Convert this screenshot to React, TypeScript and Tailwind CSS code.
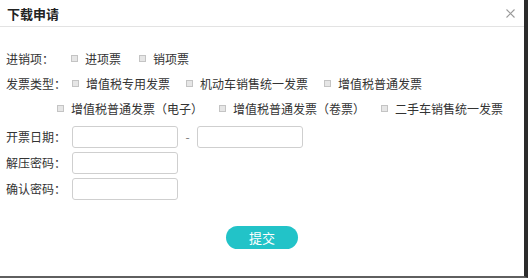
const font = { fontFamily: '"Noto Sans CJK SC", "Noto Sans", sans-serif' };

function Check({ label }: { label: string }) {
  return (
    <label className="flex items-center">
      <span className="h-[7px] w-[7px] border border-[#c4c4c4] bg-[#e6e6e6]" />
      <span className="ml-[7px] whitespace-nowrap">{label}</span>
    </label>
  );
}

function Field({ label, children }: { label: string; children: React.ReactNode }) {
  return (
    <div className="flex h-[22px] items-center">
      <span className="w-[66px] shrink-0">{label}</span>
      {children}
    </div>
  );
}

const inputCls = "h-[22px] w-[106px] rounded-[3px] border border-[#cfcfcf] bg-white";

export default function App() {
  return (
    <div
      style={font}
      className="flex h-[278px] w-[528px] flex-col border-r-4 border-b-2 border-r-[#2b2b2b] border-b-[#5f5f5f] bg-white text-[12px] leading-none text-[#333]"
    >
      <div className="flex h-[27px] shrink-0 items-center justify-between border-b border-[#e3e3e3] pl-[7px] pr-[7px]">
        <span className="text-[13px] font-bold text-[#222]">下载申请</span>
        <svg width="9" height="9" viewBox="0 0 9 9" className="mr-[2px]">
          <path d="M0.5 0.5 L8.5 8.5 M8.5 0.5 L0.5 8.5" stroke="#9a9a9a" strokeWidth="1.1" />
        </svg>
      </div>

      <div className="flex flex-col pl-[6px] pt-[19px]">
        <div className="flex h-[25px] items-center">
          <span className="w-[65px] shrink-0">进销项：</span>
          <div className="flex items-center gap-[18px]">
            <Check label="进项票" />
            <Check label="销项票" />
          </div>
        </div>
        <div className="flex h-[25px] items-center">
          <span className="w-[66px] shrink-0">发票类型：</span>
          <div className="flex items-center gap-[16px]">
            <Check label="增值税专用发票" />
            <Check label="机动车销售统一发票" />
            <Check label="增值税普通发票" />
          </div>
        </div>
        <div className="flex h-[25px] items-center pl-[51px]">
          <div className="flex items-center gap-[16px]">
            <Check label="增值税普通发票（电子）" />
            <Check label="增值税普通发票（卷票）" />
            <Check label="二手车销售统一发票" />
          </div>
        </div>

        <div className="mt-[5px] flex flex-col gap-[4px]">
          <Field label="开票日期：">
            <input className={inputCls} />
            <span className="w-[19px] text-center text-[#777]">-</span>
            <input className={inputCls} />
          </Field>
          <Field label="解压密码：">
            <input type="password" className={inputCls} />
          </Field>
          <Field label="确认密码：">
            <input type="password" className={inputCls} />
          </Field>
        </div>
      </div>

      <div className="mt-[26px] flex justify-center">
        <button className="h-[23px] w-[72px] rounded-full bg-[#22c3c8] text-[13px] text-white">提交</button>
      </div>
    </div>
  );
}
